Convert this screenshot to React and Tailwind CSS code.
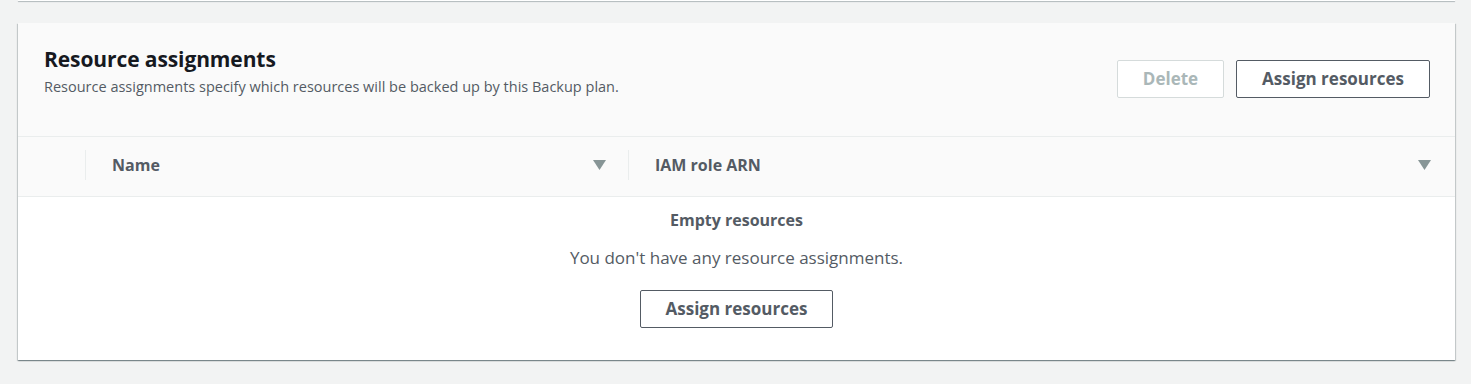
const CARD_SHADOW =
  'shadow-[0_1px_1px_0_rgba(0,28,36,0.3),1px_1px_1px_0_rgba(0,28,36,0.15),-1px_1px_1px_0_rgba(0,28,36,0.15)]'

function Caret() {
  return (
    <svg width="13" height="10" viewBox="0 0 13 10" className="shrink-0">
      <path d="M0 0 H13 L6.5 10 Z" fill="#879596" />
    </svg>
  )
}

function Button({ children, disabled }) {
  return (
    <button
      className={`h-[38px] rounded-[2px] border bg-white px-[25px] text-[17px] font-bold ${
        disabled ? 'border-[#d5dbdb] text-[#aab7b8]' : 'border-[#545b64] text-[#545b64]'
      }`}
    >
      {children}
    </button>
  )
}

export default function App() {
  return (
    <div className="min-h-[384px] w-[1471px] bg-[#f2f3f3] font-['Open_Sans','Liberation_Sans',sans-serif]">
      {/* tail of the card above */}
      <div className="ml-[18px] mr-[16px] h-px bg-white shadow-[0_1px_1px_0_rgba(0,28,36,0.3)]" />

      <div className={`ml-[18px] mr-[16px] mt-[22px] bg-white ${CARD_SHADOW}`}>
        {/* Header */}
        <div className="flex items-start justify-between bg-[#fafafa] pl-[26px] pr-[25px] h-[114px] border-b border-[#eaeded]">
          <div className="pt-[22px]">
            <h2 className="text-[21px] font-bold leading-[28px] text-[#16191f] tracking-[-0.1px]">Resource assignments</h2>
            <p className="mt-[4px] text-[14.5px] leading-[20px] text-[#545b64]">
              Resource assignments specify which resources will be backed up by this Backup plan.
            </p>
          </div>
          <div className="flex gap-[12px] pt-[37px]">
            <Button disabled>Delete</Button>
            <Button>Assign resources</Button>
          </div>
        </div>

        {/* Table header */}
        <div className="flex h-[60px] items-center bg-[#fafafa] border-b border-[#eaeded] pb-[3px]">
          <div className="w-[67px]" />
          <div className="flex h-[30px] flex-1 items-center border-l border-[#eaeded] pl-[26px] pr-[22px] max-w-[543px]">
            <span className="flex-1 text-[16px] font-bold text-[#545b64]">Name</span>
            <Caret />
          </div>
          <div className="flex h-[30px] flex-1 items-center border-l border-[#eaeded] pl-[26px] pr-[24px]">
            <span className="flex-1 text-[16px] font-bold text-[#545b64]">IAM role ARN</span>
            <Caret />
          </div>
        </div>

        {/* Empty state */}
        <div className="flex flex-col items-center pt-[10px] pb-[32px]">
          <div className="text-[16px] font-bold leading-[26px] text-[#545b64]">Empty resources</div>
          <div className="mt-[12px] text-[17px] leading-[26px] text-[#545b64]">
            You don't have any resource assignments.
          </div>
          <div className="mt-[19px]">
            <Button>Assign resources</Button>
          </div>
        </div>
      </div>
    </div>
  )
}
